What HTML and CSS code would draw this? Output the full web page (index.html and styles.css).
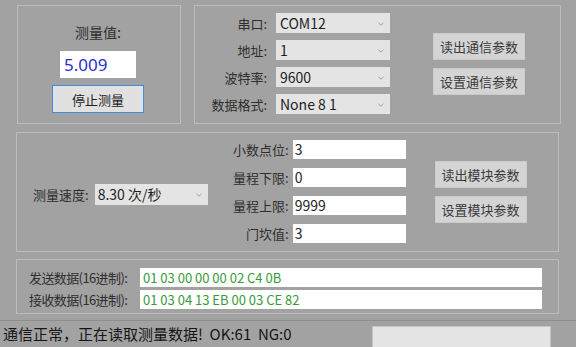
FILE: index.html
```html
<!DOCTYPE html>
<html lang="zh-CN">
<head>
    <meta charset="UTF-8">
    <title>测量工具</title>
    <link rel="stylesheet" href="styles.css">
</head>
<body>
<div class="window">

    <!-- Top: measure value + serial settings -->
    <div class="top-row">
        <div class="group measure">
            <div class="measure-label">测量值:</div>
            <div class="measure-value">5.009</div>
            <button class="btn btn-focus">停止测量</button>
        </div>

        <div class="group comm">
            <div class="form comm-form">
                <label>串口:</label>
                <div class="combo">COM12<svg class="arrow" viewBox="0 0 6 4"><path d="M0.5 0.8 L3 3.2 L5.5 0.8" /></svg></div>
                <label>地址:</label>
                <div class="combo">1<svg class="arrow" viewBox="0 0 6 4"><path d="M0.5 0.8 L3 3.2 L5.5 0.8" /></svg></div>
                <label>波特率:</label>
                <div class="combo">9600<svg class="arrow" viewBox="0 0 6 4"><path d="M0.5 0.8 L3 3.2 L5.5 0.8" /></svg></div>
                <label>数据格式:</label>
                <div class="combo">None 8 1<svg class="arrow" viewBox="0 0 6 4"><path d="M0.5 0.8 L3 3.2 L5.5 0.8" /></svg></div>
            </div>
            <div class="btn-col">
                <button class="btn">读出通信参数</button>
                <button class="btn">设置通信参数</button>
            </div>
        </div>
    </div>

    <!-- Module parameters -->
    <div class="group module">
        <div class="speed">
            <label>测量速度:</label>
            <div class="combo speed-combo">8.30 次/秒<svg class="arrow" viewBox="0 0 6 4"><path d="M0.5 0.8 L3 3.2 L5.5 0.8" /></svg></div>
        </div>
        <div class="form module-form">
            <label>小数点位:</label>
            <div class="field">3</div>
            <label>量程下限:</label>
            <div class="field">0</div>
            <label>量程上限:</label>
            <div class="field">9999</div>
            <label>门坎值:</label>
            <div class="field">3</div>
        </div>
        <div class="btn-col module-btns">
            <button class="btn">读出模块参数</button>
            <button class="btn">设置模块参数</button>
        </div>
    </div>

    <!-- Raw data -->
    <div class="group data">
        <label>发送数据(16进制):</label>
        <div class="field hex">01 03 00 00 00 02 C4 0B</div>
        <label>接收数据(16进制):</label>
        <div class="field hex">01 03 04 13 EB 00 03 CE 82</div>
    </div>

    <!-- Status bar -->
    <div class="statusbar">
        <span class="status-text">通信正常，正在读取测量数据!&nbsp; OK:61&nbsp; NG:0</span>
        <div class="progress"></div>
    </div>

</div>
</body>
</html>
```

FILE: styles.css
```css
/* General */
body {
    margin: 0;
    padding: 0;
    background-color: #a2a2a2;
    font-family: "Noto Sans CJK SC", "Noto Sans", sans-serif;
    font-size: 13px;
    color: #2e2e2e;
}

.window {
    width: 576px;
    height: 347px;
    overflow: hidden;
    display: flex;
    flex-direction: column;
}

.group {
    border: 1px solid #bcbcbc;
    box-sizing: border-box;
}

label {
    white-space: nowrap;
    line-height: 1;
}

/* Buttons */
.btn {
    font-family: inherit;
    font-size: 13px;
    color: #3a3a3a;
    background-color: #d4d4d4;
    border: 1px solid #cbcbcb;
    width: 92px;
    height: 27px;
    padding: 0;
    margin: 0;
}

.btn-focus {
    background-color: #e1e1e1;
    border: 1px solid #3d8ee0;
    color: #222;
    width: 92px;
    height: 28px;
}

.btn-col {
    display: flex;
    flex-direction: column;
    gap: 8px;
}

/* Combos and fields */
.combo {
    position: relative;
    background-color: #e4e4e4;
    height: 20px;
    box-sizing: border-box;
    padding-left: 4px;
    font-size: 14px;
    line-height: 20px;
    color: #1e1e1e;
}

.combo .arrow {
    position: absolute;
    right: 6px;
    top: 9px;
    width: 6px;
    height: 4px;
    fill: none;
    stroke: #9a9a9a;
    stroke-width: 0.9;
}

.field {
    background-color: #ffffff;
    height: 19px;
    box-sizing: border-box;
    padding-left: 2px;
    font-size: 14px;
    line-height: 19px;
    color: #1e1e1e;
}

.form {
    display: grid;
    align-items: center;
    justify-items: end;
}

.form .combo,
.form .field {
    justify-self: stretch;
}

/* Top row */
.top-row {
    display: flex;
    gap: 13px;
    padding: 5px 0 0 17px;
}

.measure {
    width: 164px;
    height: 119px;
    display: flex;
    flex-direction: column;
    align-items: center;
    padding-top: 18px;
}

.measure-label {
    font-size: 14px;
    line-height: 16px;
    margin-left: -2px;
}

.measure-value {
    width: 76px;
    height: 27px;
    margin-top: 11px;
    background-color: #ffffff;
    color: #2c2fd0;
    font-family: "Noto Sans", sans-serif;
    font-size: 17px;
    line-height: 27px;
    padding-left: 4px;
    box-sizing: border-box;
    margin-left: -2px;
}

.measure .btn-focus {
    margin-top: 7px;
    margin-left: -2px;
}

.comm {
    width: 367px;
    height: 119px;
    display: flex;
    align-items: center;
}

.comm-form {
    grid-template-columns: 72px 114px;
    column-gap: 9px;
    row-gap: 7px;
    grid-auto-rows: 20px;
    align-self: flex-start;
    margin-top: 7px;
}

.comm .btn-col {
    margin-left: 43px;
    margin-top: -1px;
}

/* Module parameters */
.module {
    width: 543px;
    height: 121px;
    margin: 8px 0 0 16px;
    display: flex;
    align-items: center;
}

.speed {
    display: flex;
    align-items: center;
    gap: 6px;
    margin-left: 16px;
    margin-top: 6px;
}

.speed-combo {
    width: 113px;
    height: 21px;
    line-height: 21px;
    padding-left: 3px;
}

.module-form {
    grid-template-columns: 56px 113px;
    column-gap: 4px;
    row-gap: 9px;
    grid-auto-rows: 19px;
    margin-left: 25px;
}

.module-btns {
    margin-left: 29px;
    gap: 8px;
}

/* Raw data */
.data {
    width: 543px;
    height: 56px;
    margin: 7px 0 0 16px;
    display: grid;
    grid-template-columns: 103px 402px;
    column-gap: 8px;
    row-gap: 3px;
    grid-auto-rows: 19px;
    align-items: center;
    padding: 8px 0 0 12px;
}

.data label {
    font-size: 13px;
    letter-spacing: -0.6px;
}

.hex {
    color: #3a9a3a;
    font-size: 13px;
    padding-left: 3px;
}

/* Status bar */
.statusbar {
    margin-top: 6px;
    border-top: 1px solid #8e8e8e;
    flex: 1;
    display: flex;
    align-items: flex-end;
    padding-left: 3px;
}

.status-text {
    font-size: 15px;
    color: #151515;
    line-height: 26px;
    white-space: nowrap;
}

.progress {
    width: 179px;
    height: 21px;
    margin-left: auto;
    margin-right: 25px;
    background-color: #e4e4e4;
    border: 1px solid #c4c4c4;
    border-bottom: none;
    box-sizing: border-box;
}
```
